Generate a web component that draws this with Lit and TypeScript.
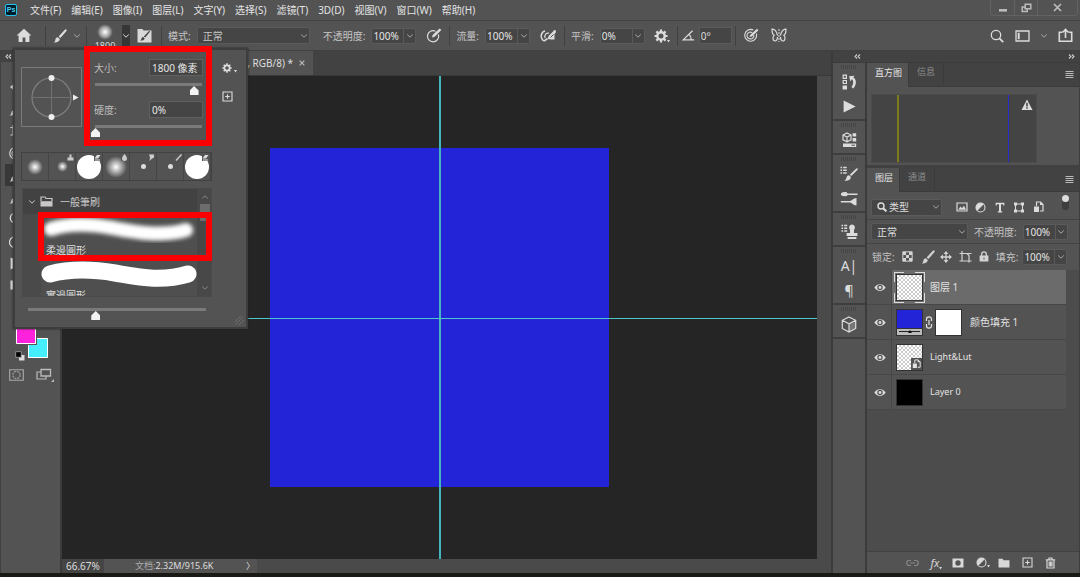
import { LitElement, html, css, svg, nothing } from "lit";
import { customElement } from "lit/decorators.js";

const shapes: Record<string, [number, number, unknown]> = {
  home: [16, 15, svg`<path fill="currentColor" d="M8 .8 .6 7.6h2V14h4V9.4h2.8V14h4V7.6h2z"/>`],
  brush: [14, 14, svg`<path fill="currentColor" d="M13.3.5c.6.5.3 1.200-.2 2L7.400 9.100 5.600 7.600 11.600 1c.6-.6 1.200-.9 1.700-.5zM4.900 8.300l1.900 1.700C6.700 12.300 4.200 13.800.6 13.500c1.500-.7 1.500-1.700 1.800-3 .3-1.300 1.300-2.200 2.500-2.200z"/>`],
  chevron: [8, 6, svg`<path fill="none" stroke="currentColor" d="M1.200 1.500 4 4.200 6.800 1.500"/>`],
  chevronUp: [8, 6, svg`<path fill="none" stroke="currentColor" d="M1.200 4.500 4 1.800 6.800 4.500"/>`],
  brushPanel: [15, 15, svg`<path fill="#d8d8d8" d="M.5 1h5l1 1.500H14.500V14.500H.5z"/><path fill="#444" d="M12.700 3c.4.3.2.8-.2 1.300L8.200 9.600 6.800 8.400 11.500 3.400c.4-.4.800-.7 1.200-.4zM6.200 9l1.400 1.200c0 1.600-1.800 2.500-4.400 2.300 1-.5 1-1.100 1.300-2 .2-.9.8-1.500 1.700-1.500z"/>`],
  pressure: [16, 15, svg`<path fill="none" stroke="currentColor" stroke-width="1.200" d="M9.500 3.200A5.600 5.600 0 1 0 12.400 6.500"/><path fill="currentColor" d="m6 9.600.6-2.700L13.600.4 15.400 2 8.600 8.700z"/>`],
  airbrush: [17, 14, svg`<path fill="none" stroke="currentColor" stroke-width="1.500" d="M5 2C1 3 .2 8 2.500 10.800c1.500 1.700 3.200.6 4.500-1.300"/><path fill="none" stroke="currentColor" stroke-width="1.200" d="M9 4.200C6.500 3.500 4 6 5 9"/><path fill="currentColor" d="m7.500 9.500 1.500-3L13.500 2l.5-1 2 .5-.3 2.200L14.500 5v5.500h-4l-1.500-.5-2 .8z"/><path stroke="#535353" d="m10.500 8.500 3-3"/>`],
  gear: [14, 14, svg`<circle cx="7" cy="7" r="3.700" fill="none" stroke="currentColor" stroke-width="2.400"/><path stroke="currentColor" stroke-width="2.200" d="M7 .5V3M7 11v2.500M.5 7H3M11 7h2.500M2.400 2.400l1.800 1.800M9.800 9.800l1.800 1.800M2.400 11.600l1.800-1.800M9.800 4.200l1.800-1.800"/>`],
  dot: [3, 3, svg`<path fill="currentColor" d="M0 0h3L1.500 2.500z"/>`],
  angle: [13, 11, svg`<path fill="none" stroke="currentColor" stroke-width="1.200" d="M10.500.8 1.200 9.800H12.200M7 4.500c1.500 1 2.200 3 2.200 5"/>`],
  target: [15, 15, svg`<path fill="none" stroke="currentColor" stroke-width="1.100" d="M9.300 2A5.900 5.900 0 1 0 12.300 5.500M8.200 4.600A3.400 3.400 0 1 0 9.800 7"/><path fill="currentColor" d="m5.500 9 .6-2L13 .8 14.400 2.200 7.800 8.500z"/>`],
  butterfly: [16, 15, svg`<path fill="none" stroke="currentColor" stroke-width="1.200" d="M6.600 7.500C5.500 3 3.200 1 1 1.200 1 4 1.300 6.500 3.200 7.200 1.500 9 1.500 12.500 3.800 13c1.700.2 2.600-2 2.800-4M9.400 7.500C10.500 3 12.800 1 15 1.200c0 2.800-.3 5.300-2.200 6C14.500 9 14.500 12.500 12.200 13c-1.700.2-2.600-2-2.800-4"/><path stroke="currentColor" stroke-dasharray="2 1" d="M8 1v13"/>`],
  search: [14, 14, svg`<circle cx="6" cy="6" r="4.700" fill="none" stroke="currentColor" stroke-width="1.300"/><path stroke="currentColor" stroke-width="1.800" d="m9.400 9.400 3.800 3.800"/>`],
  searchBold: [10, 10, svg`<circle cx="4" cy="4" r="3" fill="none" stroke="currentColor" stroke-width="1.400"/><path stroke="currentColor" stroke-width="2" d="m6.200 6.200 3.200 3.200"/>`],
  workspace: [15, 12, svg`<path fill="none" stroke="currentColor" stroke-width="1.300" d="M1 1h13v10H1z"/><path fill="currentColor" d="M2.700 2.800h2v6.400h-2z"/>`],
  share: [15, 15, svg`<path fill="none" stroke="currentColor" stroke-width="1.600" d="M4.500 4.200H1.300v9H13.700v-9h-3.200M7.500 10V2M4.800 4.200 7.500 1.500l2.700 2.700"/>`],
  minimize: [10, 10, svg`<path fill="currentColor" d="M1 6h8v2.600H1z"/>`],
  restore: [11, 10, svg`<path fill="none" stroke="currentColor" stroke-width="1.500" d="M4.200 1.200h5.600v4.600H4.200zM4.200 4H1.200v4.600h5V6"/>`],
  close: [9, 9, svg`<path stroke="currentColor" stroke-width="1.700" d="m1 1 7 7M8 1 1 8"/>`],
  collapse: [7, 5, svg`<path fill="none" stroke="currentColor" stroke-width="1.100" d="M3 .5 1 2.500l2 2M6 .5 4 2.500l2 2"/>`],
  expand: [7, 5, svg`<path fill="none" stroke="currentColor" stroke-width="1.100" d="m1 .5 2 2-2 2M4 .5l2 2-2 2"/>`],
  history: [15, 16, svg`<path fill="none" stroke="currentColor" stroke-width="1.200" d="M1.200 1.200h3.200v3.200H1.200zM1.200 6.500h3.200v3H1.200z"/><path fill="currentColor" d="M.6 11.400h4.400v4H.6zM7 2.200l5.500-.5-1.200 1.600c3.400 2.500 3.600 7.200 0 11.200L9.400 13c2.200-2.700 2.400-5.700.6-8L8.500 7.500z"/>`],
  play: [13, 13, svg`<path fill="currentColor" d="M.6.600 12.600 6.500.6 12.500z"/>`],
  library: [15, 16, svg`<path fill="none" stroke="currentColor" stroke-width="1.200" d="m5 1 4 2v4.800l-4 2-4-2V3zM1 3l4 2 4-2M5 5v4.800"/><path fill="currentColor" d="M10.600 1.200h3.600v3.400h-3.600zM10.600 6h3.600v3.400h-3.600zM1 11.500h13.200V15H1z"/><path stroke="#535353" d="M9.500 13.200H13"/>`],
  brushSettings: [18, 16, svg`<path stroke="currentColor" stroke-width="1.400" d="M.5 1.500h1.600M3.200 1.500h3.500M.5 4.300h1.600M3.200 4.300h3.500M.5 7h1.600M3.200 7h3.500"/><path fill="currentColor" d="M17.600 2.500c.4.500.2 1-.3 1.500l-6 6-1.500-1.300 6-5.800c.7-.6 1.300-.9 1.800-.4zM9 9.300l1.800 1.500c.2 2.500-2 4.400-6.600 4 1.600-.6 1.700-1.500 2.200-3C6.900 10.100 7.700 9.300 9 9.300z"/>`],
  brushes: [18, 15, svg`<path fill="currentColor" d="M1 2.200C3.500.5 7 .8 7.500 2.400H17.500V3.900H7.500C7 5.800 3.500 5.800 1 4.200zM.8 10H10c2-.3 3-2.800 6.500-3v7.500c-3.500-.2-4.500-2.700-6.500-3H.8z"/>`],
  stampList: [17, 16, svg`<path stroke="currentColor" stroke-width="1.400" d="M.5 1.500h1.600M3.200 1.500h3M.5 4.300h1.600M3.200 4.300h3M.5 7h1.600M3.200 7h3"/><path fill="currentColor" d="M11 .6a3 3 0 0 1 2 5.200V9h3.400v3H5.600V9H9V5.800A3 3 0 0 1 11 .6zM6.600 13h8.800v2H6.600z"/>`],
  cube: [16, 17, svg`<path fill="#777" d="M8 8v8l6.500-3.500V4.500z"/><path fill="none" stroke="currentColor" stroke-width="1.200" d="m8 1 6.700 3.300v8.200L8 16l-6.700-3.500V4.300zM1.300 4.300 8 7.800l6.700-3.500M8 7.800V16"/>`],
  menu: [9, 8, svg`<path stroke="currentColor" d="M.5.500h8M.5 2.500h8M.5 4.500h8M.5 6.500h8"/>`],
  warning: [12, 12, svg`<path fill="#ddd" d="m6 .500 5.500 10.500H.5z"/><path stroke="#333" stroke-width="1.400" d="M6 3.800v3.600M6 8.300v1.500"/>`],
  image: [12, 10, svg`<path fill="none" stroke="currentColor" stroke-width="1.200" d="M1 1h10v8H1z"/><path fill="currentColor" d="M2.300 7.800 4.500 4.500l1.500 1.800L8 3.800l2 4z"/>`],
  half: [11, 11, svg`<circle cx="5.500" cy="5.500" r="4.500" fill="none" stroke="currentColor" stroke-width="1.100"/><path fill="currentColor" d="M8.700 2.300A4.500 4.500 0 1 0 2.300 8.700z"/>`],
  type: [10, 11, svg`<path fill="currentColor" d="M.7.800h8.600v2.700H8.400L7.900 2.200H6v7h1.200v1.200H2.800V9.200H4v-7H2.100L1.600 3.500H.7z"/>`],
  frame: [12, 11, svg`<path fill="none" stroke="currentColor" d="M2.500 2h7v7h-7z"/><path fill="currentColor" d="M1 .500h3v3H1zM8 .500h3v3H8zM1 7.500h3v3H1zM8 7.500h3v3H8z"/>`],
  smart: [11, 12, svg`<path fill="none" stroke="currentColor" stroke-width="1.200" d="M3.500 5V1h4L10 3.500V10H7"/><path fill="currentColor" d="M1 5.500h5V11H1zM7 .500 10.500 4H7z"/>`],
  checks: [11, 11, svg`<path fill="none" stroke="currentColor" d="M.8.800h9.400v9.400H.8z"/><path fill="currentColor" d="M1 1h3v3H1zM7 1h3v3H7zM4 4h3v3H4zM1 7h3v3H1zM7 7h3v3H7z"/>`],
  move: [12, 12, svg`<path stroke="currentColor" stroke-width="1.300" d="M6 2v8M2 6h8"/><path fill="currentColor" d="m6 0 2.400 3H3.600zM6 12l2.400-3H3.600zM0 6l3-2.400v4.800zM12 6 9 3.600v4.800z"/>`],
  artboard: [13, 12, svg`<path fill="none" stroke="currentColor" stroke-width="1.200" d="M3 0v2.500M.5 2.500H8l2 2V10H3V2.500M10 10v1.500M.5 10H3M10 10h2.500M8 2.500h4.500"/>`],
  lock: [10, 11, svg`<path fill="none" stroke="currentColor" stroke-width="1.300" d="M2.700 5V3.200a2.300 2.300 0 0 1 4.600 0V5"/><path fill="currentColor" d="M.6 4.500h8.800v6H.6z"/><path stroke="#535353" d="M5 6.500v2"/>`],
  eye: [12, 9, svg`<path fill="#ddd" d="M.4 4.500C3 0 9 0 11.600 4.500 9 9 3 9 .4 4.500z"/><circle cx="6" cy="4.500" r="2.700" fill="#535353"/><circle cx="6" cy="4.500" r="1.400" fill="#ddd"/>`],
  chainV: [8, 13, svg`<path fill="none" stroke="currentColor" stroke-width="1.200" d="M1.500 5V3a2.500 2.200 0 0 1 5 0v2M1.500 8v2a2.500 2.200 0 0 0 5 0V8M4 4v5"/>`],
  chain: [13, 8, svg`<path fill="none" stroke="currentColor" stroke-width="1.200" d="M5 1.500H3.200a2.500 2.500 0 0 0 0 5H5M8 1.500h1.800a2.500 2.500 0 0 1 0 5H8M4 4h5"/>`],
  mask: [12, 10, svg`<path fill="currentColor" fill-rule="evenodd" d="M.5.500h11v9H.5zM6 2.300a2.700 2.700 0 1 0 0 5.400 2.700 2.700 0 0 0 0-5.400z"/>`],
  folder: [12, 10, svg`<path fill="currentColor" d="M.5.800h4l1 1.500h6v7.200H.5z"/>`],
  folderOpen: [13, 11, svg`<path fill="none" stroke="currentColor" stroke-width="1.200" d="M1 5V1h4l1 1.500h6V5"/><path fill="currentColor" d="M.5 5.200h12v5.300H.5z"/>`],
  add: [11, 11, svg`<path fill="none" stroke="currentColor" stroke-width="1.100" d="M1 1h9v9H1zM5.500 3.200v4.600M3.200 5.500h4.600"/>`],
  trash: [11, 12, svg`<path fill="none" stroke="currentColor" stroke-width="1.200" d="M.8 2.800h9.400M4 2.500V1h3v1.500M2 3v8h7V3M4.200 4.500v5M5.600 4.500v5M7 4.500v5"/>`],
  dial: [61, 60, svg`<path fill="none" stroke="#7a7a7a" d="M.5.500h60v59H.500z"/><circle cx="30.500" cy="30.500" r="19.500" fill="none" stroke="#808080" stroke-width="1.200"/><path stroke="#707070" d="M11 30.500h39M30.500 11v39"/><circle cx="30.500" cy="11" r="3" fill="#eee"/><circle cx="30.500" cy="50" r="3" fill="#eee"/><path fill="#eee" d="m52 27.500 5.500 3-5.500 3z"/>`],
  grip: [18, 4, svg`<path stroke="#454545" stroke-width="4" stroke-dasharray="1 1" d="M1 2h16"/>`],
  resize: [12, 12, svg`<path stroke="#6c6c6c" d="M2 8 8 2M3 10 10 3M6 11l5-5"/>`],
  quickMask: [15, 12, svg`<path fill="none" stroke="#aaa" stroke-width="1.100" d="M.7.700h13.600v10.600H.700z"/><circle cx="7.500" cy="6" r="3.600" fill="none" stroke="#999" stroke-width="1.300" stroke-dasharray="2 .8"/>`],
  screenMode: [18, 14, svg`<path fill="none" stroke="#bbb" stroke-width="1.200" d="M1 4h9v7H1z"/><path fill="#535353" stroke="#bbb" stroke-width="1.300" d="M5 1.500h9.500V8H5z"/><path fill="#bbb" d="M18 11v3h-3z"/>`],
  tinyStamp: [7, 7, svg`<path fill="#ccc" d="M2.500.500h2v3h2v3h-6v-3h2z"/>`],
  tinyEraser: [7, 7, svg`<path fill="#ddd" d="M3 1h3.500L4 4.500H.500zM1 5.500h5v1H1z"/>`],
  tinyDrop: [7, 7, svg`<path fill="#ccc" d="M3.500 0C5 2 6 3 6 4.500a2.500 2.500 0 0 1-5 0C1 3 2 2 3.500 0z"/>`],
  tinySmudge: [7, 7, svg`<path fill="#ccc" d="M1 .500h5v3L3.500 5 1.500 7 2 3.500z"/>`],
  tinyBrush: [7, 7, svg`<path stroke="#ccc" stroke-width="1.400" d="M6.500.500 1 6.500"/>`],
  miniSwap: [10, 10, svg`<path fill="#ddd" d="M4 4h5.500v5.500H4z"/><path fill="#000" stroke="#aaa" stroke-width=".8" d="M.700.700h5.600v5.600H.700z"/>`],
};

const icon = (name: string) => {
  const [w, h, body] = shapes[name];
  return html`<svg class="icon" width=${w} height=${h} viewBox="0 0 ${w} ${h}" aria-hidden="true">${body}</svg>`;
};

const iconButton = (name: string, label: string, extra = "") =>
  html`<button class="ib ${extra}" aria-label=${label}>${icon(name)}</button>`;

const select = (label: string, options: string[], extra: string) => html`
  <span class="select ${extra}">
    <select aria-label=${label}>${options.map((o) => html`<option>${o}</option>`)}</select>
    ${icon("chevron")}
  </span>`;

const combo = (label: string, value: string) => html`
  <label class="field"><span>${label}</span>
    <span class="combo"><input type="text" .value=${value} /><button aria-label=${label}>${icon("chevron")}</button></span>
  </label>`;

const shared = css`
  :host { color: #dcdcdc; font: 10px/14px "Noto Sans", "Noto Sans CJK SC", sans-serif; }
  * { box-sizing: border-box; }
  button, input, select { font: inherit; color: inherit; background: none; border: 0; padding: 0; margin: 0; min-width: 0; border-radius: 0; outline: 0; }
  .icon { display: block; flex: none; }
  .ib { display: grid; place-items: center; flex: none; }
  .select { display: grid; align-items: center; background: #454545; border: 1px solid #5a5a5a; border-radius: 2px; height: 17px; }
  .select > * { grid-area: 1 / 1; }
  .select select { appearance: none; width: 100%; height: 100%; padding-left: 5px; }
  .select .icon { justify-self: end; margin-right: 1px; color: #a8a8a8; pointer-events: none; }
  .field { display: flex; align-items: center; gap: 6px; color: #c4c4c4; white-space: nowrap; }
  .combo { display: flex; height: 16px; background: #454545; border: 1px solid #5a5a5a; border-radius: 2px; color: #e4e4e4; }
  .combo input { width: 31px; padding-left: 1px; }
  .combo button { width: 12px; border-left: 1px solid #5a5a5a; display: grid; place-items: center; color: #a8a8a8; }
`;

@customElement("menu-bar")
class MenuBar extends LitElement {
  static styles = [shared, css`
    :host { display: flex; height: 20px; background: #535353; }
    .logo { width: 12px; height: 12px; margin: 4px 13px 0 5px; border: 1px solid #26c3ef; border-radius: 2px; background: #001d2b; color: #4fd0f5; font: bold 7px/10px "Liberation Sans", sans-serif; text-align: center; }
    .items { display: flex; gap: 10px; flex: 1; }
    .items button { white-space: nowrap; color: #e4e4e4; }
    .window { display: flex; height: 16px; margin-right: 2px; border: 1px solid #626262; border-top: 0; border-radius: 0 0 4px 4px; color: #bbb; }
    .window .ib { width: 23px; }
    .window .ib + .ib { border-left: 1px solid #626262; }
    .window .wide { width: 40px; }
  `];
  render() {
    const items = ["文件(F)", "编辑(E)", "图像(I)", "图层(L)", "文字(Y)", "选择(S)", "滤镜(T)", "3D(D)", "视图(V)", "窗口(W)", "帮助(H)"];
    return html`
      <span class="logo">Ps</span>
      <nav class="items">${items.map((t) => html`<button>${t}</button>`)}</nav>
      <div class="window">${iconButton("minimize", "最小化")}${iconButton("restore", "还原")}${iconButton("close", "关闭", "wide")}</div>`;
  }
}

@customElement("options-bar")
class OptionsBar extends LitElement {
  static styles = [shared, css`
    :host { display: flex; align-items: center; height: 31px; background: #535353; border-top: 1px solid #434343; border-bottom: 1px solid #404040; }
    .group { display: flex; align-items: center; gap: 10px; padding: 0 7px 0 6px; height: 20px; border-left: 1px solid #414141; }
    .group:first-child { border: 0; width: 45px; padding-left: 16px; }
    .brush { width: 41px; padding-left: 7px; gap: 6px; }
    .preset { width: 75px; padding-left: 5px; gap: 4px; }
    .preset .ib { margin-left: 3px; }
    .tip { display: flex; flex-direction: column; align-items: center; width: 26px; height: 23px; font-size: 9px; line-height: 12px; }
    .ball { width: 16px; height: 16px; flex: none; border-radius: 50%; background: radial-gradient(#fff, #aaa 40%, #535353 70%); }
    .drop { width: 8px; height: 22px; background: #363636; display: grid; place-items: center; flex: none; }
    .mode { width: 113px; margin-right: 3px; }
    .angle { width: 33px; height: 17px; background: #454545; border: 1px solid #5a5a5a; padding-left: 1px; }
    .tight { gap: 4px; padding: 0 3px 0 4px; }
    .last { gap: 12px; padding-left: 8px; }
    .right { display: flex; align-items: center; gap: 10px; margin-left: auto; padding-right: 7px; }
    .right .ib:first-child { margin-right: 1px; }
    .muted { color: #a8a8a8; }
    .corner { display: flex; align-items: end; }
    .corner .icon { margin-left: -1px; }
  `];
  render() {
    return html`
      <div class="group">${iconButton("home", "主页")}</div>
      <div class="group brush">${iconButton("brush", "画笔")}<span class="muted">${icon("chevron")}</span></div>
      <div class="group preset">
        <span class="tip"><span class="ball"></span>1800</span>
        <button class="drop" aria-label="画笔预设">${icon("chevron")}</button>
        ${iconButton("brushPanel", "画笔设置")}
      </div>
      <div class="group">
        <label class="field"><span>模式:</span>${select("模式", ["正常", "溶解"], "mode")}</label>
        ${combo("不透明度:", "100%")}${iconButton("pressure", "不透明度压力")}
      </div>
      <div class="group">${combo("流量:", "100%")}${iconButton("airbrush", "喷枪")}</div>
      <div class="group">${combo("平滑:", "0%")}<span class="corner">${iconButton("gear", "平滑选项")}${icon("dot")}</span></div>
      <div class="group tight">${icon("angle")}<input class="angle" aria-label="角度" .value=${"0°"} /></div>
      <div class="group last">${iconButton("target", "大小压力")}${iconButton("butterfly", "对称")}</div>
      <div class="right">${iconButton("search", "搜索")}${iconButton("workspace", "工作区")}<span class="muted">${icon("chevron")}</span>${iconButton("share", "共享")}</div>`;
  }
}

@customElement("tool-box")
class ToolBox extends LitElement {
  static styles = [shared, css`
    :host { display: flex; flex-direction: column; width: 62px; background: #535353; border-right: 2px solid #3b3b3b; border-left: 1px solid #414141; }
    .head { height: 11px; padding: 3px 0 0 4px; background: #424242; color: #ccc; }
    .tools { display: grid; grid-template-columns: 22px 22px; grid-auto-rows: 22px; padding: 14px 4px 0; height: 262px; overflow: hidden; }
    .tools .ib.on { background: #383838; }
    .colors { display: grid; grid-template-columns: 12px 20px; grid-template-rows: 14px 20px; height: 34px; margin-left: 15px; }
    .sw { border: 1px solid #fff; outline: 1px solid #555; width: 20px; height: 20px; z-index: 1; }
    .front { background: #ff22dd; grid-area: 1 / 1; z-index: 2; }
    .back { background: #44eeff; grid-area: 2 / 2; }
    .mini { display: block; margin: -7px 0 0 14px; }
    .modes { display: flex; gap: 12px; padding: 7px 0 0 8px; align-items: center; }
  `];
  render() {
    const tools = ["move", "frame", "brush", "frame", "artboard", "pressure", "target", "brush", "brush", "history", "brush", "half", "search", "half", "pressure", "type", "play", "frame", "mask", "search"];
    return html`
      <div class="head">${icon("collapse")}</div>
      <div class="tools">${tools.map((t, i) => iconButton(t, "工具", i === 8 ? "on" : ""))}</div>
      <div class="colors"><button class="sw front" aria-label="前景色"></button><button class="sw back" aria-label="背景色"></button></div>
      <span class="mini">${icon("miniSwap")}</span>
      <div class="modes">${iconButton("quickMask", "快速蒙版")}${iconButton("screenMode", "屏幕模式")}</div>`;
  }
}

@customElement("doc-view")
class DocView extends LitElement {
  static styles = [shared, css`
    :host { display: flex; flex-direction: column; flex: 1; min-width: 0; background: #4a4a4a; }
    .tabs { height: 25px; background: #424242; border-bottom: 1px solid #383838; display: flex; }
    .tab { width: 251px; background: #535353; display: flex; align-items: center; justify-content: flex-end; gap: 5px; padding-right: 8px; color: #ddd; }
    .tab .ib { color: #bbb; width: 7px; }
    .tab .icon { width: 6px; height: 6px; }
    .canvas { flex: 1; min-height: 0; margin-right: 14px; background: #252525; display: grid; place-items: center; position: relative; overflow: hidden; }
    .art { height: 70%; aspect-ratio: 1; background: #2323d7; }
    .guide { position: absolute; background: #4cc8cc; }
    .v { top: 0; bottom: 0; left: 50%; width: 2px; margin-left: -1px; background: #45b6bd; }
    .h { left: 0; right: 0; top: 50%; height: 1px; }
    .status { height: 14px; display: flex; background: #535353; line-height: 13px; color: #ddd; }
    .zoom { width: 42px; padding-left: 4px; background: #454545; }
    .info { width: 153px; display: flex; justify-content: space-between; padding: 0 2px 0 31px; }
    .info b { font-weight: normal; color: #aaa; }
    .info span { font-size: 9px; }
    .rest { flex: 1; background: #4a4a4a; }
  `];
  render() {
    return html`
      <div class="tabs"><div class="tab"><span>, RGB/8) *</span>${iconButton("close", "关闭文档")}</div></div>
      <div class="canvas"><div class="art"></div><i class="guide v"></i><i class="guide h"></i></div>
      <div class="status"><input class="zoom" aria-label="缩放" .value=${"66.67%"} />
        <div class="info"><span><b>文档:</b>2.32M/915.6K</span><span>〉</span></div><div class="rest"></div></div>`;
  }
}

@customElement("icon-dock")
class IconDock extends LitElement {
  static styles = [shared, css`
    :host { display: block; width: 34px; background: #535353; border-right: 2px solid #3b3b3b; }
    .set { display: flex; flex-direction: column; align-items: center; border-bottom: 2px solid #3e3e3e; padding-top: 2px; }
    .ib { height: 25px; width: 100%; }
    .tall .ib { height: 26px; }
    .glyph { font-size: 14px; line-height: 24px; }
  `];
  render() {
    const glyph = (t: string, l: string) => html`<button class="ib glyph" aria-label=${l}>${t}</button>`;
    return html`
      <div class="set">${icon("grip")}${iconButton("history", "历史记录")}${iconButton("play", "动作")}</div>
      <div class="set tall">${icon("grip")}${iconButton("library", "库")}</div>
      <div class="set">${icon("grip")}${iconButton("brushSettings", "画笔设置")}${iconButton("brushes", "画笔")}</div>
      <div class="set tall">${icon("grip")}${iconButton("stampList", "仿制源")}</div>
      <div class="set">${icon("grip")}${glyph("A|", "字符")}${glyph("¶", "段落")}</div>
      <div class="set tall">${icon("grip")}${iconButton("cube", "3D")}</div>`;
  }
}

@customElement("panel-stack")
class PanelStack extends LitElement {
  static styles = [shared, css`
    :host { display: flex; flex-direction: column; flex: 1; min-width: 0; background: #535353; border-right: 1px solid #3e3e3e; }
    .tabs { display: flex; height: 24px; background: #424242; border-bottom: 1px solid #3b3b3b; font-size: 9px; }
    .tabs button { padding: 0 8px 5px; border-right: 1px solid #3b3b3b; color: #8c8c8c; }
    .tabs .on { background: #535353; color: #e6e6e6; margin-bottom: -1px; padding-right: 6px; }
    .tabs .more { margin: 0 5px 0 auto; padding: 0; border: 0; color: #bbb; }
    .hist { height: 81px; border-bottom: 3px solid #414141; padding: 7px 0 0 4px; }
    .graph { position: relative; width: 166px; height: 69px; background: #444; border: 1px solid #4b4b4b; }
    .bar { position: absolute; top: 0; bottom: 0; width: 1px; }
    .y { left: 15%; width: 2px; background: #7c7c1c; }
    .b { left: 83%; background: #2929d0; }
    .warn { position: absolute; right: 3px; top: 4px; }
    .row { display: flex; align-items: center; padding-left: 4px; border-bottom: 1px solid #434343; }
    .filter { height: 28px; padding-top: 3px; }
    .kind { width: 71px; }
    .kind select { padding-left: 17px; }
    .kind .icon:first-child { justify-self: start; margin-left: 5px; color: #ddd; z-index: 1; }
    .icons { display: flex; flex: 1; justify-content: space-between; margin: 0 17px 0 13px; }
    .icons .ib { width: 13px; }
    .toggle { display: flex; align-items: flex-start; width: 7px; height: 15px; margin-right: 10px; border-radius: 4px; background: #3e3e3e; align-self: flex-start; }
    .toggle::before { content: ""; width: 7px; height: 7px; border-radius: 50%; background: #ddd; }
    .blend { height: 24px; gap: 6px; }
    .mode { width: 97px; }
    .locks { height: 26px; border: 0; color: #c4c4c4; padding: 0 0 1px 5px; }
    .locks .lockset { display: flex; gap: 7px; margin: 0 6px 0 7px; color: #d4d4d4; }
    .lockset .ib { width: 12px; }
    .locks .field { gap: 4px; }
    .list { flex: 1; background: #4c4c4c; padding-right: 13px; }
    .layer { display: flex; align-items: center; height: 34px; background: #535353; border-bottom: 1px solid #474747; box-sizing: content-box; color: #e2e2e2; }
    .layer .vis { width: 25px; height: 100%; border-right: 1px solid #474747; padding-left: 2px; }
    .layer .body { display: flex; flex: 1; align-items: center; height: 100%; padding-left: 4px; }
    .layer.on .body { background: #6b6b6b; }
    .thumb { position: relative; width: 27px; height: 27px; border: 1px solid #333; margin-right: 7px; display: flex; flex-direction: column; justify-content: flex-end; align-items: flex-end; }
    .layer.on .thumb::after {
      content: ""; position: absolute; inset: -3px; border: 1px solid #ddd;
      mask: conic-gradient(at 10px 10px, #0000 75%, #000 0) 0 0 / calc(100% - 10px) calc(100% - 10px);
    }
    .clear { background: repeating-conic-gradient(#ccc 0 25%, #fff 0 50%) 0 0 / 4px 4px; }
    .badge { background: #535353; padding: 1px; width: 11px; height: 12px; }
    .badge .icon { width: 9px; height: 10px; }
    .fill { background: #2323d7; margin-right: 2px; }
    .fill i { width: 100%; height: 7px; background: linear-gradient(#222, #222) 50% 2px / 21px 1px no-repeat #bbb; border-top: 1px solid #333; display: grid; place-items: center; }
    .fill i::before { content: ""; border: 2px solid transparent; border-bottom: 3px solid #111; border-top: 0; }
    .white { background: #fff; margin-left: 2px; margin-right: 8px; }
    .black { background: #000; }
    .latin { font-size: 9px; }
    .foot { display: flex; justify-content: flex-end; align-items: center; gap: 7px; height: 22px; padding: 0 21px 0 0; border-top: 1px solid #414141; }
    .foot .ib { width: 16px; color: #d8d8d8; }
    .foot .off { color: #888; }
    .foot .fx { font-style: italic; font-size: 11px; }
    .sub { display: flex; align-items: end; }
    .sub .icon:last-child { margin: 0 -3px 0 0; }
  `];
  layer(name: string, thumb: unknown, on = false) {
    const latin = /^[\x20-\x7e]+$/.test(name) ? "latin" : "";
    return html`<div class="layer ${on ? "on" : ""}">${iconButton("eye", "可见性", "vis")}<div class="body">${thumb}<span class=${latin}>${name}</span></div></div>`;
  }
  render() {
    return html`
      <div class="tabs"><button class="on">直方图</button><button>信息</button>${iconButton("menu", "面板菜单", "more")}</div>
      <div class="hist"><div class="graph"><i class="bar y"></i><i class="bar b"></i><span class="warn">${icon("warning")}</span></div></div>
      <div class="tabs"><button class="on">图层</button><button>通道</button>${iconButton("menu", "面板菜单", "more")}</div>
      <div class="row filter">
        <span class="select kind">${icon("searchBold")}<select aria-label="筛选"><option>类型</option></select>${icon("chevron")}</span>
        <div class="icons">${["image", "half", "type", "frame", "smart"].map((n) => iconButton(n, "筛选类型"))}</div>
        <button class="toggle" aria-label="筛选开关"></button>
      </div>
      <div class="row blend">${select("混合模式", ["正常", "溶解"], "mode")}${combo("不透明度:", "100%")}</div>
      <div class="row locks">锁定:<div class="lockset">${["checks", "brush", "move", "artboard", "lock"].map((n) => iconButton(n, "锁定"))}</div>${combo("填充:", "100%")}</div>
      <div class="list">
        ${this.layer("图层 1", html`<span class="thumb clear"></span>`, true)}
        ${this.layer("颜色填充 1", html`<span class="thumb fill"><i></i></span>${icon("chainV")}<span class="thumb white"></span>`)}
        ${this.layer("Light&Lut", html`<span class="thumb clear"><span class="badge">${icon("smart")}</span></span>`)}
        ${this.layer("Layer 0", html`<span class="thumb black"></span>`)}
      </div>
      <div class="foot">${iconButton("chain", "链接", "off")}
        <button class="ib fx" aria-label="图层样式"><span class="sub">fx${icon("dot")}</span></button>
        ${iconButton("mask", "蒙版")}
        <button class="ib" aria-label="调整图层"><span class="sub">${icon("half")}${icon("dot")}</span></button>
        ${iconButton("folder", "新建组")}${iconButton("add", "新建图层")}${iconButton("trash", "删除")}</div>`;
  }
}

@customElement("brush-popup")
class BrushPopup extends LitElement {
  static styles = [shared, css`
    :host { display: block; width: 235px; height: 281px; padding: 9px 5px 0 6px; background: #535353; border: 2px solid #3d3d3d; box-shadow: 0 0 2px #222; }
    .top { display: grid; grid-template-columns: 61px 115px 14px; column-gap: 9px; }
    .dial { padding-top: 8px; }
    .line { display: flex; justify-content: space-between; align-items: center; height: 17px; padding: 0 3px; color: #bdbdbd; }
    .line input { width: 54px; height: 17px; background: #454545; border: 1px solid #606060; padding-left: 2px; color: #e6e6e6; }
    .side { display: flex; flex-direction: column; align-items: start; gap: 18px; margin: 4px 0 0 7px; }
    .side .ib { height: 11px; }
    .gearbox .icon { width: 10px; height: 10px; }
    .gearbox { display: flex; align-items: end; gap: 2px; }
    .gearbox .icon:last-child { width: 3px; height: 3px; }
    .range { appearance: none; display: block; width: 100%; height: 14px; margin: 5px 0 6px; background: linear-gradient(#7a7a7a, #7a7a7a) 4px 2px / calc(100% - 8px) 3px no-repeat; }
    .range::-webkit-slider-thumb { appearance: none; width: 9px; height: 9px; margin-top: 5px; background: #f2f2f2; clip-path: polygon(50% 0, 100% 50%, 100% 100%, 0 100%, 0 50%); }
    .presets { display: grid; grid-template-columns: repeat(7, 1fr); width: 191px; height: 29px; margin-top: 9px; border: 1px solid #424242; }
    .presets button { display: grid; place-items: center; border-right: 1px solid #454545; }
    .presets button > * { grid-area: 1 / 1; }
    .presets .icon { place-self: start end; z-index: 1; background: #535353; margin: 1px 1px 0 0; }
    .ball { border-radius: 50%; background: radial-gradient(#fff, #535353 70%); width: 16px; height: 16px; }
    .small { width: 11px; height: 11px; }
    .full { width: 24px; height: 24px; background: #fff; }
    .wide { width: 22px; height: 22px; }
    .pin { width: 5px; height: 5px; background: #ddd; }
    .brushes { display: grid; grid-template-columns: 1fr 15px; grid-template-rows: 100%; width: 190px; height: 109px; margin: 7px 0 0 1px; overflow: hidden; background: #4a4a4a; border: 1px solid #4a4a4a; }
    .group { display: flex; align-items: center; gap: 4px; height: 25px; padding-left: 5px; background: #424242; color: #c8c8c8; }
    .group span { margin-left: 3px; }
    .stroke { display: block; width: 156px; height: 45px; margin-left: 18px; background: #4f4f4f; text-align: left; color: #ddd; border-bottom: 1px solid #484848; }
    .stroke svg { display: block; }
    .stroke span { display: block; padding-left: 5px; line-height: 14px; }
    .scroll { display: flex; flex-direction: column; align-items: center; justify-content: space-between; background: #484848; padding: 5px 0; color: #888; }
    .scroll i { width: 10px; height: 17px; margin: 4px 0 auto; background: #6c6c6c; }
    .bottom { width: 186px; margin: 9px 0 0 3px; }
    .grip { position: absolute; right: 1px; bottom: 1px; }
  `];
  render() {
    const presets: [string, string][] = [["", ""], ["small", "tinyStamp"], ["full", "tinyEraser"], ["wide", "tinyDrop"], ["pin", "tinySmudge"], ["pin", "tinyBrush"], ["full", "tinyEraser"]];
    return html`
      <div class="top">
        <div class="dial">${icon("dial")}</div>
        <div>
          <div class="line"><label for="size">大小:</label><input id="size" .value=${"1800 像素"} /></div>
          <input class="range" type="range" aria-label="大小" min="0" max="100" .value=${"93"} />
          <div class="line"><label for="hard">硬度:</label><input id="hard" .value=${"0%"} /></div>
          <input class="range" type="range" aria-label="硬度" min="0" max="100" .value=${"0"} />
        </div>
        <div class="side"><button class="gearbox" aria-label="选项">${icon("gear")}${icon("dot")}</button>${iconButton("add", "新建预设")}</div>
      </div>
      <div class="presets">${presets.map(([c, t]) => html`<button aria-label="画笔预设"><i class="ball ${c}"></i>${t ? icon(t) : nothing}</button>`)}</div>
      <div class="brushes">
        <div>
          <div class="group">${icon("chevron")}${icon("folderOpen")}<span>一般筆刷</span></div>
          <button class="stroke">
            <svg width="156" height="28" viewBox="0 0 156 28"><defs><filter id="soft" filterUnits="userSpaceOnUse" x="0" y="-4" width="156" height="36"><feGaussianBlur stdDeviation="2"/></filter></defs><path filter="url(#soft)" fill="none" stroke="#fff" stroke-width="14" stroke-linecap="round" d="M10 14C28 8 50 9 72 13S120 22 145 15"/></svg>
            <span>柔邊圓形</span></button>
          <button class="stroke">
            <svg width="156" height="28" viewBox="0 0 156 28"><path fill="none" stroke="#fff" stroke-width="17" stroke-linecap="round" d="M9 14C28 9 50 9 74 13S120 22 147 14"/></svg>
            <span>實邊圓形</span></button>
        </div>
        <div class="scroll">${icon("chevronUp")}<i></i>${icon("chevron")}</div>
      </div>
      <input class="range bottom" type="range" aria-label="预览大小" min="0" max="100" .value=${"38"} />
      <span class="grip">${icon("resize")}</span>`;
  }
}

@customElement("app-root")
class AppRoot extends LitElement {
  static styles = [shared, css`
    :host { display: flex; flex-direction: column; height: 100vh; background: #1b1916; position: relative; overflow: hidden; }
    .main { display: flex; flex: 1; min-height: 0; margin-bottom: 4px; }
    .side { display: flex; flex-direction: column; width: 249px; border-left: 2px solid #3b3b3b; }
    .head { display: flex; justify-content: space-between; height: 11px; padding: 3px 5px 0 21px; background: #424242; color: #ccc; }
    .cols { display: flex; flex: 1; min-height: 0; border-top: 1px solid #3b3b3b; }
    brush-popup { position: absolute; left: 13px; top: 48px; z-index: 3; }
    .mark { position: absolute; z-index: 4; border: 6px solid #fb0000; pointer-events: none; }
    .one { left: 84px; top: 46px; width: 128px; height: 100px; }
    .two { left: 38px; top: 212px; width: 174px; height: 49px; }
  `];
  render() {
    return html`
      <menu-bar></menu-bar>
      <options-bar></options-bar>
      <div class="main">
        <tool-box></tool-box>
        <doc-view></doc-view>
        <div class="side">
          <div class="head">${icon("collapse")}${icon("expand")}</div>
          <div class="cols"><icon-dock></icon-dock><panel-stack></panel-stack></div>
        </div>
      </div>
      <brush-popup></brush-popup>
      <i class="mark one"></i><i class="mark two"></i>`;
  }
}
